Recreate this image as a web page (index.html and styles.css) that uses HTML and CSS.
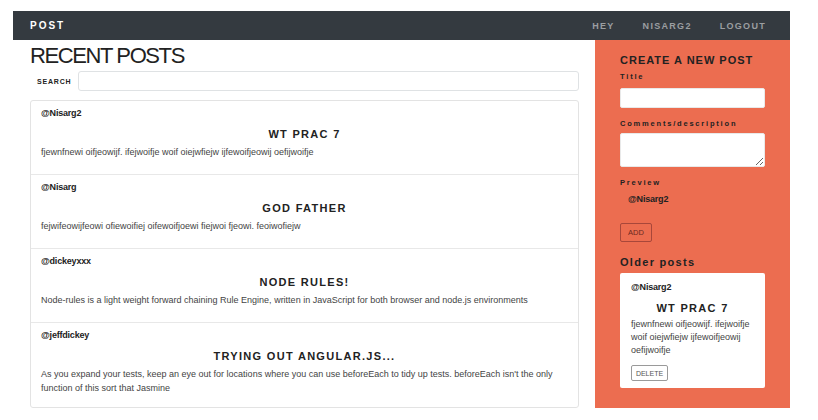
FILE: index.html
```html
<!DOCTYPE html>
<html>
<head>
<meta charset="utf-8">
<link rel="stylesheet" href="styles.css">
</head>
<body>
<div class="page">
  <nav class="navbar">
    <div class="brand">POST</div>
    <div class="links">
      <span class="link">HEY</span>
      <span class="link">NISARG2</span>
      <span class="link">LOGOUT</span>
    </div>
  </nav>
  <div class="content">
    <main class="main">
      <h1 class="heading">RECENT POSTS</h1>
      <div class="search">
        <label class="search-label">SEARCH</label>
        <input class="search-input" type="text">
      </div>
      <div class="posts">
        <div class="post">
          <div class="user">@Nisarg2</div>
          <div class="title">WT PRAC 7</div>
          <div class="body">fjewnfnewi oifjeowijf. ifejwoifje woif oiejwfiejw ijfewoifjeowij oefijwoifje</div>
        </div>
        <div class="post">
          <div class="user">@Nisarg</div>
          <div class="title">GOD FATHER</div>
          <div class="body">fejwifeowijfeowi ofiewoifiej oifewoifjoewi fiejwoi fjeowi. feoiwofiejw</div>
        </div>
        <div class="post">
          <div class="user">@dickeyxxx</div>
          <div class="title">NODE RULES!</div>
          <div class="body">Node-rules is a light weight forward chaining Rule Engine, written in JavaScript for both browser and node.js environments</div>
        </div>
        <div class="post">
          <div class="user">@jeffdickey</div>
          <div class="title">TRYING OUT ANGULAR.JS...</div>
          <div class="body">As you expand your tests, keep an eye out for locations where you can use beforeEach to tidy up tests. beforeEach isn't the only function of this sort that Jasmine</div>
        </div>
      </div>
    </main>
    <aside class="sidebar">
      <h2 class="side-heading">CREATE A NEW POST</h2>
      <div class="field-label first">Title</div>
      <input class="field-input" type="text">
      <div class="field-label">Comments/description</div>
      <textarea class="field-textarea"></textarea>
      <div class="field-label">Preview</div>
      <div class="preview-user">@Nisarg2</div>
      <button class="add-btn">ADD</button>
      <h3 class="older">Older posts</h3>
      <div class="old-card">
        <div class="user">@Nisarg2</div>
        <div class="old-title">WT PRAC 7</div>
        <div class="old-body">fjewnfnewi oifjeowijf. ifejwoifje woif oiejwfiejw ijfewoifjeowij oefijwoifje</div>
        <button class="delete-btn">DELETE</button>
      </div>
    </aside>
  </div>
</div>
</body>
</html>
```

FILE: styles.css
```css
* { box-sizing: border-box; }
html, body { margin: 0; padding: 0; background: #fff; }
body {
  font-family: "Liberation Sans", Arial, sans-serif;
  color: #333;
}
.page {
  width: 777px;
  margin: 11px 0 0 13px;
}
.navbar {
  height: 29px;
  background: #343a40;
  display: flex;
  align-items: center;
  justify-content: space-between;
  padding: 0 24px 0 17px;
}
.brand {
  color: #fff;
  font-weight: bold;
  font-size: 10px;
  letter-spacing: 2px;
}
.links {
  display: flex;
  gap: 28px;
}
.link {
  color: #9b9ea1;
  font-weight: bold;
  font-size: 9px;
  letter-spacing: 1.3px;
}
.content {
  display: flex;
  align-items: stretch;
}
.main {
  width: 582px;
  padding: 3px 16px 0 17px;
}
.heading {
  margin: 0;
  font-size: 22px;
  line-height: 26px;
  font-weight: normal;
  letter-spacing: -1.4px;
  color: #222;
}
.search {
  display: flex;
  align-items: center;
  margin: 2px 0 0 7px;
  gap: 7px;
}
.search-label {
  font-size: 7px;
  font-weight: bold;
  letter-spacing: 0.8px;
  color: #222;
}
.search-input {
  flex: 1;
  height: 20px;
  border: 1px solid #dfe2e4;
  border-radius: 3px;
  margin: 0;
}
.posts {
  margin-top: 9px;
  border: 1px solid #e3e3e3;
  border-radius: 3px;
}
.post {
  padding: 6px 10px 15px;
  border-bottom: 1px solid #e8e8e8;
}
.post:last-child { border-bottom: none; padding-bottom: 12px; }
.user {
  font-size: 9px;
  line-height: 12px;
  font-weight: bold;
  color: #222;
  letter-spacing: -0.2px;
}
.title {
  margin-top: 8px;
  text-align: center;
  font-size: 11px;
  line-height: 14px;
  font-weight: bold;
  letter-spacing: 1.3px;
  color: #222;
}
.body {
  margin-top: 4px;
  font-size: 9px;
  line-height: 14px;
  color: #444;
}
.sidebar {
  width: 195px;
  background: #ec6d50;
  padding: 13px 25px 19px;
}
.side-heading {
  margin: 0;
  font-size: 11px;
  line-height: 14px;
  letter-spacing: 1px;
  color: #222;
}
.field-label {
  margin-top: 11px;
  font-size: 7.5px;
  line-height: 10px;
  font-weight: bold;
  letter-spacing: 1.8px;
  color: #222;
}
.field-label.first { margin-top: 5px; }
.field-input {
  display: block;
  width: 145px;
  height: 20px;
  margin-top: 6px;
  border: 1px solid #e9e9e9;
  border-radius: 2px;
  background: #fff;
}
.field-textarea {
  display: block;
  width: 145px;
  height: 34px;
  margin-top: 4px;
  border: 1px solid #e9e9e9;
  border-radius: 2px;
  background: #fff;
  resize: vertical;
}
.preview-user {
  margin: 5px 0 0 8px;
  font-size: 9px;
  line-height: 12px;
  font-weight: bold;
  color: #222;
  letter-spacing: -0.2px;
}
.add-btn {
  display: block;
  margin-top: 18px;
  width: 32px;
  height: 19px;
  padding: 0;
  background: transparent;
  border: 1px solid #a8473a;
  border-radius: 2px;
  font-family: "Liberation Sans", Arial, sans-serif;
  font-size: 7.5px;
  color: #6b2a22;
}
.older {
  margin: 13px 0 0;
  font-size: 11px;
  line-height: 14px;
  letter-spacing: 1.3px;
  color: #222;
}
.old-card {
  margin-top: 4px;
  background: #fff;
  border-radius: 2px;
  padding: 8px 11px 7px;
}
.old-title {
  margin-top: 8px;
  text-align: center;
  font-size: 11px;
  line-height: 14px;
  font-weight: bold;
  letter-spacing: 1.3px;
  color: #222;
}
.old-body {
  margin-top: 3px;
  font-size: 9px;
  line-height: 13px;
  color: #444;
}
.delete-btn {
  display: block;
  margin-top: 8px;
  width: 37px;
  height: 16px;
  padding: 0;
  background: #fff;
  border: 1px solid #9a9a9a;
  border-radius: 2px;
  font-family: "Liberation Sans", Arial, sans-serif;
  font-size: 7px;
  color: #555;
}
```
